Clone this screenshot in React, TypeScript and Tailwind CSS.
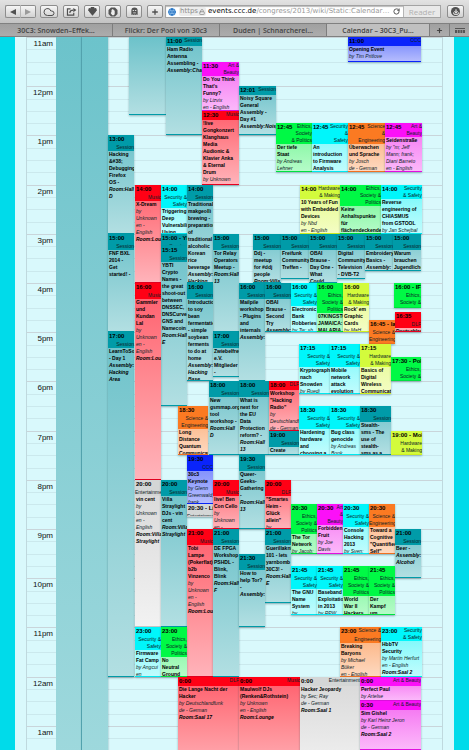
import type { CSSProperties, ReactNode } from "react";
import { Cloud, Download, Globe, Lock, Plus, RotateCw, Share } from "lucide-react";

type Kind =
  | "Session"
  | "Music"
  | "DLF"
  | "Art & Beauty"
  | "Ethics, Society & Politics"
  | "Security & Safety"
  | "Hardware & Making"
  | "Science & Engineering"
  | "CCC"
  | "Entertainment";

type CalendarEvent = {
  x: number;
  w: number;
  from: string;
  to: string;
  kind: Kind;
  label?: string;
  title?: string;
  by?: string;
  room?: string;
  bare?: boolean;
};

const S: Kind = "Session";
const M: Kind = "Music";
const D: Kind = "DLF";
const A: Kind = "Art & Beauty";
const E: Kind = "Ethics, Society & Politics";
const Y: Kind = "Security & Safety";
const H: Kind = "Hardware & Making";
const G: Kind = "Science & Engineering";
const C: Kind = "CCC";
const T: Kind = "Entertainment";

const headStyles: Record<Kind, string> = {
  Session: "bg-[#009ba8]",
  Music: "bg-[#ff0015]",
  DLF: "bg-[#ff0015]",
  "Art & Beauty": "bg-[#fb10f8]",
  "Ethics, Society & Politics": "bg-[#00f945]",
  "Security & Safety": "bg-[#00f6fb]",
  "Hardware & Making": "bg-[#d3fb3c]",
  "Science & Engineering": "bg-[#fb7a22]",
  CCC: "bg-[#0a24fb]",
  Entertainment: "bg-[#d4d6d6]",
};

const bodyStyles: Record<Kind, string> = {
  Session: "from-[#6cc2ca] to-[#b2dfe2] border-[#009ba8]",
  Music: "from-[#ff5b6b] to-[#ffb3ba] border-[#e60020]",
  DLF: "from-[#ff5b6b] to-[#ffb3ba] border-[#e60020]",
  "Art & Beauty": "from-[#f36bf0] to-[#fbb8fa] border-[#e010e0]",
  "Ethics, Society & Politics": "from-[#66f690] to-[#b5fbc8] border-[#00e040]",
  "Security & Safety": "from-[#62f8fb] to-[#c0fcfd] border-[#00e8f0]",
  "Hardware & Making": "from-[#e3fa83] to-[#f4fdc4] border-[#d0f020]",
  "Science & Engineering": "from-[#fba970] to-[#fdd9c0] border-[#f07020]",
  CCC: "from-[#6f7dfb] to-[#b5bcfd] border-[#0a24fb]",
  Entertainment: "from-[#d8d8d8] to-[#f2f2f2] border-[#c8c8c8]",
};

// Line breaks of the track names for narrow, medium and wide cards.
const trackLines: Partial<Record<Kind, [string, string, string]>> = {
  "Art & Beauty": ["Art\n&\nBeauty", "Art &\nBeauty", "Art & Beauty"],
  "Ethics, Society & Politics": ["Ethics,\nSociety &\nPolitics", "Ethics,\nSociety\n& Politics", "Ethics,\nSociety &\nPolitics"],
  "Security & Safety": ["Security &\nSafety", "Security\n&\nSafety", "Security\n& Safety"],
  "Hardware & Making": ["Hardware\n& Making", "Hardware\n& Making", "Hardware\n& Making"],
  "Science & Engineering": ["Science &\nEngineering", "Science\n&\nEngineering", "Science &\nEngineering"],
};

function trackText(kind: Kind, width: number) {
  const lines = trackLines[kind];
  return lines ? lines[width < 35 ? 0 : width < 40 ? 1 : 2] : kind;
}

const events: CalendarEvent[] = [
  { x: 21, w: 37, from: "11:00", to: "12:35", kind: S, bare: true },
  { x: 58, w: 36, from: "11:00", to: "13:00", kind: S, title: "Ham Radio\nAntenna\nAssembling -", room: "Assembly:Chaos" },
  { x: 94, w: 37, from: "11:30", to: "12:30", kind: A, title: "Do You Think\nThat's\nFunny?", by: "by Lizvix\nen - English" },
  { x: 94, w: 37, from: "12:30", to: "14:00", kind: M, title: "!live\nGongkonzert\nKlanghaus\nMedia\nAudionic &\nKlavier Anka\n& Eternal\nDrum", by: "by Unknown" },
  { x: 131, w: 37, from: "12:00", to: "13:00", kind: S, label: "12:01", title: "Noisy Square\nGeneral\nAssembly -\nDay #1", room: "Assembly:Noisy" },
  { x: 240, w: 73, from: "11:00", to: "11:30", kind: C, title: "Opening Event", by: "by Tim Pritlove" },
  { x: 168, w: 36, from: "12:45", to: "13:45", kind: E, title: "Der tiefe\nStaat", by: "by Andreas\nLehner" },
  { x: 204, w: 36, from: "12:45", to: "13:45", kind: Y, title: "An\nintroduction\nto Firmware\nAnalysis" },
  { x: 240, w: 37, from: "12:45", to: "13:45", kind: G, title: "Überwachen\nund Sprache", by: "by Josch\nde - German" },
  { x: 277, w: 37, from: "12:45", to: "13:45", kind: A, title: "Seidenstraße", by: 'by "m; Jeff\nMann; frank;\nDiani Barreto\nen - English' },
  { x: 192, w: 40, from: "14:00", to: "15:00", kind: H, title: "10 Years of Fun\nwith Embedded\nDevices", by: "by Nbd\nen - English" },
  { x: 232, w: 41, from: "14:00", to: "15:00", kind: E, title: "Keine\nAnhaltspunkte\nfür\nflächendeckende" },
  { x: 273, w: 41, from: "14:00", to: "15:00", kind: Y, title: "Reverse\nengineering of\nCHIASMUS\nfrom GSTOOL", by: "by Jan Schejbal" },

  { x: 0, w: 26, from: "13:00", to: "15:00", kind: S, title: "Hacking\n&#38;\nDebugging\nFirefox\nOS -", room: "Room:Hall\nD" },
  { x: 0, w: 26, from: "15:00", to: "17:00", kind: S, title: "FNF BXL\n2014 -\nGet\nstarted! -" },
  { x: 0, w: 26, from: "17:00", to: "24:00", kind: S, title: "LearnToSolder\n- Day 1", room: "Assembly:\nHacking\nArea" },
  { x: 27, w: 26, from: "14:00", to: "16:00", kind: M, title: "X-Dream", by: "by\nUnknown\nen -\nEnglish", room: "Room:Lounge" },
  { x: 53, w: 26, from: "14:00", to: "15:00", kind: Y, title: "Triggering\nDeep\nVulnerabilities\nUsing" },
  { x: 79, w: 26, from: "14:00", to: "16:00", kind: S, title: "Traditional\nmakgeolli\nbrewing -\npreparation\nof\ntraditional\nalcoholic\nKorean\nrice\nbeverage", room: "Assembly:\nHacking" },
  { x: 53, w: 26, from: "15:00", to: "15:15", kind: S, label: "15:00 - YBTI" },
  { x: 53, w: 26, from: "15:15", to: "18:30", kind: S, title: "YBTI\nCrypto\nNames -\nthe great\nshoot-out\nbetween\nDNSSEC,\nDNSCurve,\nGNS and\nNamecoin", room: "Room:Hall\nE" },
  { x: 105, w: 26, from: "15:00", to: "17:00", kind: S, title: "Tor Relay\nOperators\nMeetup -", room: "Room:Hall\n13" },
  { x: 27, w: 26, from: "16:00", to: "20:00", kind: M, title: "Gammler\nund\nKundan\nLal", by: "by\nUnknown\nen -\nEnglish", room: "Room:Lounge" },
  { x: 79, w: 26, from: "16:00", to: "18:00", kind: S, title: "Introduction\nto soy\nbean\nfermentation\n- simple\nsoybean\nferments\nto do at\nhome", room: "Assembly:\nHacking\nBase" },
  { x: 105, w: 26, from: "17:00", to: "17:55", kind: S, title: "Zwiebelfreunde\ne.V.\nMitglieder\n-" },

  { x: 145, w: 28, from: "15:00", to: "16:00", kind: S, title: "Ddj -\nmeetup\nfor #ddj\npeople", room: "Room:Villa" },
  { x: 173, w: 28, from: "15:00", to: "15:55", kind: S, title: "Freifunk\nCommunity\nTreffen -" },
  { x: 201, w: 28, from: "15:00", to: "16:00", kind: S, title: "OBAI\nBrause -\nDay One -\nWhat\nCould" },
  { x: 229, w: 28, from: "15:00", to: "15:55", kind: S, title: "Digital\nCommunity\nTelevision\n- DVB-T2" },
  { x: 257, w: 28, from: "15:00", to: "15:45", kind: S, title: "Embroidery\nBasics -", room: "Assembly:" },
  { x: 285, w: 28, from: "15:00", to: "15:45", kind: S, title: "Warum\nbrauchen\nJugendliche" },

  { x: 131, w: 26, from: "16:00", to: "18:00", kind: S, title: "Mailpile\nworkshop\n- Plugins\nand\ninternals", room: "Assembly:" },
  { x: 157, w: 26, from: "16:00", to: "17:00", kind: S, title: "OBAI\nBrause -\nSecond\nTry", room: "Assembly:" },
  { x: 183, w: 26, from: "16:00", to: "17:00", kind: Y, title: "Electronic\nBank\nRobberies", by: "by Tw; sb" },
  { x: 209, w: 26, from: "16:00", to: "17:00", kind: E, title: "07KINGSTON\nJAMAICA:\nMALARIA" },
  { x: 235, w: 26, from: "16:00", to: "17:00", kind: H, title: "Rock' em\nGraphic\nCards", by: "by MaH" },
  { x: 286, w: 27, from: "16:00", to: "16:30", kind: E, label: "16:00 - IFG" },
  { x: 287, w: 26, from: "16:35", to: "17:00", kind: D, title: "Deutschlandfunk" },
  { x: 261, w: 26, from: "16:45", to: "17:15", kind: G, label: "16:45 - lang" },
  { x: 191, w: 31, from: "17:15", to: "18:15", kind: Y, title: "Kryptographie\nnach\nSnowden", by: "by Ruedi" },
  { x: 222, w: 30, from: "17:15", to: "18:15", kind: Y, title: "Mobile\nnetwork\nattack\nevolution" },
  { x: 252, w: 31, from: "17:15", to: "18:15", kind: H, title: "Basics of\nDigital\nWireless\nCommunication" },
  { x: 283, w: 30, from: "17:30", to: "18:00", kind: E, label: "17:30 - Politik" },

  { x: 70, w: 30, from: "18:30", to: "19:30", kind: G, title: "Long\nDistance\nQuantum\nCommunication" },
  { x: 101, w: 30, from: "18:00", to: "19:30", kind: S, title: "New\ngsmmap.org\ntool\nworkshop -", room: "Room:Hall\nD" },
  { x: 131, w: 30, from: "18:00", to: "19:30", kind: S, title: "What is\nnext for\nthe EU\nData\nProtection\nreform? -", room: "Room:Hall\n13" },
  { x: 161, w: 30, from: "18:00", to: "19:00", kind: D, title: 'Workshop\n"Hacking\nRadio"', by: "by\nDeutschlandfunk\nde - German" },
  { x: 161, w: 30, from: "19:00", to: "19:30", kind: S, title: "Create" },
  { x: 191, w: 31, from: "18:30", to: "19:30", kind: Y, title: "Hardening\nhardware\nand\nchoosing a" },
  { x: 222, w: 30, from: "18:30", to: "19:30", kind: Y, title: "Bug class\ngenocide", by: "by Andreas\nBogk" },
  { x: 252, w: 31, from: "18:30", to: "19:30", kind: S, title: "Stealth-\nsms - The\nuse of\nstealth-\nsms as a" },
  { x: 283, w: 31, from: "19:00", to: "19:30", kind: H, label: "19:00 - Mobile" },

  { x: 79, w: 26, from: "19:30", to: "20:30", kind: C, title: "30c3\nKeynote", by: "by Glenn\nGreenwald;\nfrank" },
  { x: 131, w: 26, from: "19:30", to: "21:00", kind: S, title: "Queer-\nGeeks-\nGathering\n-", room: "Room:Hall\n13" },
  { x: 27, w: 26, from: "20:00", to: "23:00", kind: T, title: "vin cent", by: "by\nUnknown\nen -\nEnglish", room: "Room:Villa\nStraylight" },
  { x: 53, w: 26, from: "20:00", to: "23:00", kind: S, title: "Villa\nStraylight\nDJs - vin\ncent", room: "Room:Villa\nStraylight" },
  { x: 79, w: 26, from: "20:30", to: "20:45", kind: T, label: "20:30 - Lightning" },
  { x: 105, w: 26, from: "20:00", to: "21:00", kind: M, title: "live! Ben\nCon Cello", by: "by\nUnknown\nen -" },
  { x: 157, w: 26, from: "20:00", to: "21:00", kind: D, title: '"Smartes\nHeim -\nGlück\nallein"', by: "by" },
  { x: 183, w: 26, from: "20:30", to: "21:30", kind: E, title: "The Tor\nNetwork", by: "by Jacob;" },
  { x: 209, w: 26, from: "20:30", to: "21:30", kind: A, title: "Forbidden\nFruit", by: "by Joe\nDavis" },
  { x: 235, w: 26, from: "20:30", to: "21:30", kind: Y, title: "Console\nHacking\n2013", by: "by Sven;" },
  { x: 261, w: 26, from: "20:30", to: "21:30", kind: G, title: 'Toward a\nCognitive\n"Quantified\nSelf"' },

  { x: 79, w: 26, from: "21:00", to: "24:00", kind: M, title: "Tobi\nLampe\n(Pokerflat)\nb2b\nVinzenco", by: "by\nUnknown\nen -\nEnglish", room: "Room:Lounge" },
  { x: 105, w: 26, from: "21:00", to: "24:00", kind: S, title: "DE FPGA\nWorkshop\nPSHDL -\nBlink,\nBlink", room: "Room:Hall\nF" },
  { x: 157, w: 26, from: "21:00", to: "22:30", kind: S, title: "Guerillaknit\n101 - lets\nyarnbomb\n30C3! -", room: "Room:Hall\nE" },
  { x: 131, w: 26, from: "21:30", to: "23:00", kind: S, title: "How to\nhelp Tor?\n-", room: "Assembly:" },
  { x: 287, w: 26, from: "21:00", to: "22:00", kind: S, title: "Beer -", room: "Assembly:\nAlcohol" },
  { x: 183, w: 26, from: "21:45", to: "22:45", kind: Y, title: "The GNU\nName\nSystem", by: "by" },
  { x: 209, w: 26, from: "21:45", to: "22:45", kind: Y, title: "Baseband\nExploitation\nin 2013", by: "by RPW" },
  { x: 235, w: 26, from: "21:45", to: "22:45", kind: E, title: "World\nWar II\nHackers" },
  { x: 261, w: 26, from: "21:45", to: "22:45", kind: E, title: "Der\nKampf\num" },

  { x: 27, w: 26, from: "23:00", to: "24:00", kind: Y, title: "Firmware\nFat Camp", by: "by Angcui\nen" },
  { x: 53, w: 26, from: "23:00", to: "24:00", kind: E, title: "No\nNeutral\nGround" },
  { x: 232, w: 41, from: "23:00", to: "24:00", kind: G, title: "Breaking\nBaryons", by: "by Michael\nBüker\nen - English" },
  { x: 273, w: 41, from: "23:00", to: "24:00", kind: Y, title: "HbbTV\nSecurity", by: "by Martin Herfurt\nen - English", room: "Room:Saal 2" },

  { x: 70, w: 61, from: "24:00", to: "26:00", kind: D, title: "Die Lange Nacht der\nHacker", by: "by Deutschlandfunk\nde - German", room: "Room:Saal 17" },
  { x: 131, w: 61, from: "24:00", to: "26:00", kind: M, title: "Maulwolf DJs\n(Renken&Rothstein)", by: "by Unknown\nen - English", room: "Room:Lounge" },
  { x: 192, w: 60, from: "24:00", to: "26:00", kind: T, title: "Hacker Jeopardy", by: "by Sec; Ray\nde - German", room: "Room:Saal 1" },
  { x: 252, w: 61, from: "24:00", to: "24:30", kind: A, title: "Perfect Paul", by: "by Artelse" },
  { x: 252, w: 61, from: "24:30", to: "25:30", kind: A, title: "Sim Gishel", by: "by Karl Heinz Jeron\nde - German", room: "Room:Saal 2" },
];

const hours = ["11am", "12pm", "1pm", "2pm", "3pm", "4pm", "5pm", "6pm", "7pm", "8pm", "9pm", "10pm", "11pm", "12am", "1am"];

// Grid row line of a time; the board begins at 11:00 and has one row for every five minutes.
function rowOf(time: string) {
  const [h, m] = time.split(":").map(Number);
  return (h - 11) * 12 + Math.round(m / 5) + 1;
}

function clock(time: string) {
  return time.replace(/^24/, "0");
}

function EventCard({ event }: { event: CalendarEvent }) {
  const place: CSSProperties = {
    gridColumn: `${event.x + 1} / span ${event.w}`,
    gridRow: `${rowOf(event.from)} / ${rowOf(event.to)}`,
  };
  const short = !event.title && !event.bare;
  return (
    <article
      style={place}
      className={`overflow-hidden border-b bg-linear-to-b text-[5px] leading-[7px] text-[#0c2226] shadow-[0_1px_2px_rgba(0,60,70,0.35)] ${bodyStyles[event.kind]}`}
    >
      {!event.bare && (
        <header className={`flow-root text-right whitespace-pre-line ${short ? "h-full" : "min-h-[9px]"} ${headStyles[event.kind]}`}>
          <time className="float-left h-[9px] max-w-full overflow-hidden px-px text-[6px] leading-[9px] font-bold whitespace-nowrap text-black">
            {event.label ?? clock(event.from)}
          </time>
          {trackText(event.kind, event.w)}
        </header>
      )}
      {!event.bare && !short && (
        <div className="pl-px whitespace-pre">
          <h3 className="font-bold text-black">{event.title}</h3>
          {event.by && <p className="italic">{event.by}</p>}
          {event.room && <p className="font-bold text-black italic">{event.room}</p>}
        </div>
      )}
    </article>
  );
}

function ToolButton({ label, className = "", children }: { label: string; className?: string; children: ReactNode }) {
  return (
    <button
      aria-label={label}
      className={`flex h-[13px] shrink-0 items-center justify-center rounded-[2px] border border-[#8d8d8d] bg-linear-to-b from-[#f6f6f6] to-[#d2d2d2] text-[#505050] ${className}`}
    >
      {children}
    </button>
  );
}

function Toolbar() {
  return (
    <div className="flex h-[23px] items-center bg-linear-to-b from-[#e2e2e2] to-[#c3c3c3] px-[5px]">
      <div className="mr-[4px] flex">
        <ToolButton label="Back" className="w-[16px] rounded-r-none border-r-[#b5b5b5]">
          <svg viewBox="0 0 6 6" className="size-[6px]" fill="currentColor"><path d="M6 0v6L0 3z" /></svg>
        </ToolButton>
        <ToolButton label="Forward" className="w-[15px] rounded-l-none border-l-0">
          <svg viewBox="0 0 6 6" className="size-[6px]" fill="#9b9b9b"><path d="M0 0v6l6-3z" /></svg>
        </ToolButton>
      </div>
      <div className="mr-[2px] flex gap-[5px]">
        <ToolButton label="iCloud tabs" className="w-[18px]"><Cloud size={12} strokeWidth={2} /></ToolButton>
        <ToolButton label="Share" className="w-[16px]">
          <svg viewBox="0 0 12 10" className="h-[9px] w-[11px]" fill="none" stroke="currentColor" strokeWidth="1.300">
            <path d="M5 2H1.500v7h7V6.500" />
            <path d="M4 6.500C4.300 4.300 5.500 3.400 8 3.400" />
            <path d="M8 1l3.500 2.400L8 5.800z" fill="currentColor" stroke="none" />
          </svg>
        </ToolButton>
        <ToolButton label="Flattr" className="w-[16px]">
          <svg viewBox="0 0 10 10" className="size-[9px]" fill="currentColor">
            <path d="M3 0h4v1.500l2-.5 1 3-1.500 1H9L5 9.800 1 5h.5L0 4l1-3 2 .5z" />
          </svg>
        </ToolButton>
        <ToolButton label="Block ads" className="w-[16px]">
          <svg viewBox="0 0 10 10" className="size-[10px]">
            <path d="M3 .5h4L9.500 3v4L7 9.500H3L.5 7V3z" fill="#555" />
            <path d="M3.500 5V2.800h.8V2h.8v.8h.8v.7h.8V7L6 8.200H4.200L2.700 6z" fill="#eee" />
          </svg>
        </ToolButton>
        <ToolButton label="Ghostery" className="w-[16px]">
          <svg viewBox="0 0 10 10" className="size-[9px]">
            <path d="M1.500 9V4a3.500 3.500 0 0 1 7 0v5l-1.200-.7L6 9l-1-.7L4 9l-1.200-.7z" fill="#555" />
            <path d="M3 3.200h1.500v1.300H3zM5.500 3.200H7v1.300H5.500zM3.500 6h3v1h-3z" fill="#ddd" />
          </svg>
        </ToolButton>
        <ToolButton label="New bookmark" className="w-[16px]"><Plus size={8} strokeWidth={4} /></ToolButton>
      </div>
      <div className="flex h-[13px] min-w-0 flex-1 items-center border border-[#a3a3a3] bg-white pl-[2px] font-['DejaVu_Sans',sans-serif] text-[7px] leading-[11px] shadow-[inset_0_1px_1px_#bbb]">
        <Globe size={8} strokeWidth={3} className="shrink-0 rounded-full bg-[#b9dcf7] text-[#2a75c4]" />
        <span className="ml-[3px] flex h-[9px] shrink-0 items-center gap-px rounded-[2px] bg-[#ececec] px-px text-[#8c8c8c]">
          https <Lock size={6} strokeWidth={3} />
        </span>
        <label htmlFor="address" className="ml-[2px] shrink-0 text-black">events.ccc.de</label>
        <input
          id="address"
          className="min-w-0 flex-1 bg-transparent text-[#999] outline-none"
          defaultValue="/congress/2013/wiki/Static:Calendar…"
        />
        <button aria-label="Reload" className="mr-[3px] shrink-0 text-[#444]"><RotateCw size={7} strokeWidth={3} /></button>
        <button className="h-[11px] w-[37px] shrink-0 border-l border-[#b5b5b5] bg-[#e9e9e9] font-['Open_Sans',sans-serif] text-[8px] leading-[10px] text-[#b0b0b0]">
          Reader
        </button>
      </div>
      <ToolButton label="Downloads" className="ml-[6px] w-[17px]">
        <span className="flex size-[9px] items-center justify-center rounded-full bg-[#505050] text-white">
          <Download size={6} strokeWidth={4} />
        </span>
      </ToolButton>
    </div>
  );
}

const tabs = ["30C3: Snowden–Effek…", "Flickr: Der Pool von 30c3", "Duden | Schnarcherei…", "Calendar – 30C3_Pu…"];

function TabBar() {
  return (
    <nav className="grid h-[14px] grid-cols-[113fr_107fr_107fr_103fr_20px_19px] border-t border-b border-[#808080] bg-linear-to-b from-[#a0a0a0] to-[#acacac] text-[7px] leading-[11px] font-semibold text-[#444]">
      {tabs.map((tab, i) => (
        <button
          key={tab}
          className={`min-w-0 truncate border-r border-[#7d7d7d] px-1 ${i === 3 ? "bg-[#c0c0c0]" : ""}`}
        >
          {tab}
        </button>
      ))}
      <button aria-label="New tab" className="flex items-center justify-center border-r border-[#7d7d7d]">
        <Plus size={7} strokeWidth={4} />
      </button>
      <button aria-label="Show all tabs" className="flex items-center justify-center">
        <svg viewBox="0 0 10 5" className="h-[5px] w-[10px]" fill="#555"><path d="M0 0h10v1H0zM0 2h2v3H0zM2.700 2h2v3h-2zM5.400 2h2v3h-2zM8 2h2v3H8z" /></svg>
      </button>
    </nav>
  );
}

function HourLines() {
  return (
    <div aria-hidden="true" className="grid h-[738px] grid-rows-[repeat(60,minmax(0,1fr))] [grid-area:1/1]">
      {Array.from({ length: 60 }, (_, i) => (
        <div key={i} className={`border-t ${i % 4 === 0 ? "border-[#c9d5da]" : "border-[#cbe9ed]"}`} />
      ))}
    </div>
  );
}

export default function App() {
  return (
    <div className="flex h-screen flex-col overflow-hidden font-['Liberation_Sans',Arial,sans-serif]">
      <div className="shrink-0 font-['Open_Sans','Noto_Sans',sans-serif]">
        <Toolbar />
        <TabBar />
      </div>
      <main className="min-h-0 flex-1 overflow-hidden bg-[#00dbea] px-[15px]">
        <div className="bg-[#d9f9fc] px-[11px]">
          <div className="grid border-x border-[#bfd9de]">
            <HourLines />
            <div className="flex h-[738px] min-w-0 [grid-area:1/1]">
              <div className="grid w-[29px] shrink-0 grid-rows-[repeat(15,minmax(0,1fr))]">
                {hours.map((hour) => (
                  <div key={hour} className="pt-[2px] pr-[3px] text-right text-[8px] leading-[9px] text-[#111]">{hour}</div>
                ))}
              </div>
              <div className="w-[26px] shrink-0 border-r border-[#5fb3bd] bg-linear-to-b from-[#6cc3cb] to-[#9fd9dd]" />
              <div className="w-[26px] shrink-0 bg-linear-to-b from-[#6cc3cb] to-[#9fd9dd] shadow-[0_0_2px_rgba(0,60,70,0.4)]" />
              <section
                aria-label="Events"
                className="grid min-w-0 flex-1 grid-cols-[repeat(334,minmax(0,1fr))] grid-rows-[repeat(180,minmax(0,1fr))]"
              >
                {events.map((event) => (
                  <EventCard key={`${event.x}-${event.from}`} event={event} />
                ))}
              </section>
            </div>
          </div>
        </div>
      </main>
    </div>
  );
}
